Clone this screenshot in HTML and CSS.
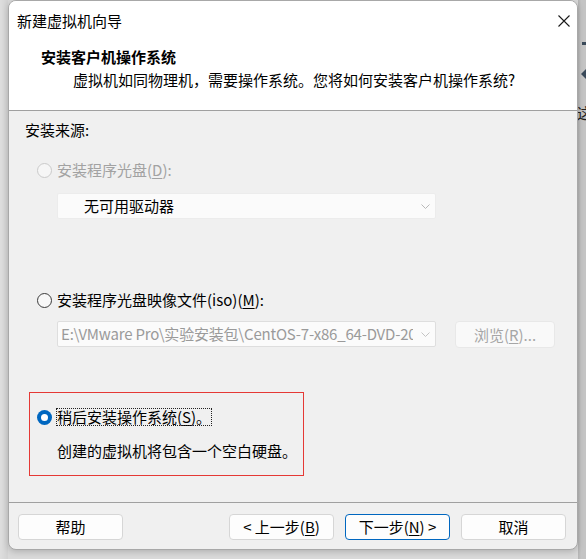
FILE: index.html
```html
<!DOCTYPE html>
<html lang="zh-CN">
<head>
<meta charset="utf-8">
<title>新建虚拟机向导</title>
<link rel="stylesheet" href="styles.css">
</head>
<body>
<div class="desk">
  <div class="gap-left"></div>
  <div class="window">
    <div class="header">
      <div class="titlebar">
        <span class="title">新建虚拟机向导</span>
        <svg class="close" width="12" height="12" viewBox="0 0 12 12"><path d="M0.5 0.5L11.5 11.5M11.5 0.5L0.5 11.5" stroke="#1a1a1a" stroke-width="1.1" fill="none"/></svg>
      </div>
      <div class="heading">安装客户机操作系统</div>
      <div class="subtitle">虚拟机如同物理机，需要操作系统。您将如何安装客户机操作系统?</div>
    </div>
    <div class="content">
      <div class="source">安装来源:</div>
      <div class="radio-row disabled first">
        <span class="radio radio-disabled"></span>
        <span class="label">安装程序光盘(<u>D</u>):</span>
      </div>
      <div class="combo combo-drive">
        <span class="combo-text">无可用驱动器</span>
        <svg class="chev" width="9" height="5" viewBox="0 0 9 5"><path d="M0.5 0.5L4.5 4.5L8.5 0.5" stroke="#b8b8b8" fill="none"/></svg>
      </div>
      <div class="radio-row second">
        <span class="radio radio-off"></span>
        <span class="label">安装程序光盘映像文件(iso)(<u>M</u>):</span>
      </div>
      <div class="iso-row">
        <div class="combo combo-iso">
          <span class="combo-text iso-text">E:\VMware Pro\实验安装包\CentOS-7-x86_64-DVD-2009.iso</span>
          <svg class="chev" width="9" height="5" viewBox="0 0 9 5"><path d="M0.5 0.5L4.5 4.5L8.5 0.5" stroke="#c4c4c4" fill="none"/></svg>
        </div>
        <div class="btn btn-disabled">浏览(<u>R</u>)...</div>
      </div>
      <div class="later-box">
        <div class="radio-row later">
          <span class="radio radio-on"></span>
          <span class="label focus">稍后安装操作系统(<u>S</u>)。</span>
        </div>
        <div class="later-desc">创建的虚拟机将包含一个空白硬盘。</div>
      </div>
    </div>
    <div class="footer">
      <div class="btn">帮助</div>
      <div class="nav">
        <div class="btn">&lt; 上一步(<u>B</u>)</div>
        <div class="btn btn-default">下一步(<u>N</u>) &gt;</div>
        <div class="btn">取消</div>
      </div>
    </div>
  </div>
  <div class="strip">
    <span class="mark dash"></span>
    <span class="mark tri"></span>
    <span class="mark glyph">这</span>
  </div>
</div>
</body>
</html>
```

FILE: styles.css
```css
* { box-sizing: border-box; }
html, body { margin: 0; padding: 0; }
body {
  width: 586px;
  height: 559px;
  overflow: hidden;
  background: #d9d9d9;
  font-family: "Noto Sans CJK SC", "Microsoft YaHei", sans-serif;
  font-size: 15px;
  color: #000;
}
.desk {
  display: flex;
  width: 586px;
  height: 559px;
}
.gap-left {
  width: 8px;
  flex: none;
  background: linear-gradient(to right, #dedede, #d2d2d2);
}
.window {
  width: 570px;
  height: 550px;
  flex: none;
  display: flex;
  flex-direction: column;
  border: 1px solid #a8a8a8;
  border-radius: 8px;
  overflow: hidden;
  background: #f0f0f0;
  box-shadow: 0 2px 6px rgba(0,0,0,0.18);
  position: relative;
  z-index: 1;
}
.header {
  background: #ffffff;
  border-bottom: 1px solid #a0a0a0;
  height: 110px;
  flex: none;
}
.titlebar {
  height: 39px;
  display: flex;
  align-items: center;
  padding-left: 8px;
  padding-right: 7px;
}
.title {
  line-height: 20px;
  flex: 1;
}
.close { display: block; }
.heading {
  margin-top: 7px;
  padding-left: 32px;
  line-height: 20px;
  font-weight: bold;
}
.subtitle {
  margin-top: 3px;
  padding-left: 64px;
  line-height: 20px;
}
.content {
  flex: 1;
  padding-top: 9px;
}
.source {
  padding-left: 16px;
  line-height: 20px;
}
.radio-row {
  display: flex;
  align-items: center;
  height: 20px;
  padding-left: 28px;
}
.radio-row.first { margin-top: 20px; }
.radio-row.second { margin-top: 71px; }
.radio-row.disabled { color: #a2a2a2; }
.label { line-height: 20px; margin-left: 5px; }
.radio {
  width: 15px;
  height: 15px;
  border-radius: 50%;
  flex: none;
}
.radio-disabled {
  border: 1px solid #cacaca;
  background: #f6f6f6;
}
.radio-off {
  border: 1px solid #3b3b3b;
  background: #f8f8f8;
}
.radio-on {
  background: #0067c0;
  position: relative;
}
.radio-on::after {
  content: "";
  position: absolute;
  left: 4px;
  top: 4px;
  width: 7px;
  height: 7px;
  border-radius: 50%;
  background: #ffffff;
}
.combo {
  display: flex;
  align-items: center;
  height: 26px;
  width: 379px;
  background: #fbfbfb;
  border: 1px solid #ececec;
  border-radius: 2px;
  overflow: hidden;
}
.combo-drive {
  margin-top: 13px;
  margin-left: 48px;
  padding-left: 26px;
}
.combo-text {
  flex: 1;
  white-space: nowrap;
  overflow: hidden;
  line-height: 20px;
}
.chev { flex: none; margin: 0 5px 0 8px; }
.iso-row {
  display: flex;
  margin-top: 11px;
  margin-left: 48px;
  gap: 19px;
}
.combo-iso {
  padding-left: 3px;
  border-color: #dedede;
}
.iso-text {
  color: #9a9a9a;
  letter-spacing: -0.2px;
}
.btn {
  width: 105px;
  height: 26px;
  display: flex;
  align-items: center;
  justify-content: center;
  background: #fdfdfd;
  border: 1px solid #d6d6d6;
  border-radius: 4px;
  line-height: 20px;
  white-space: nowrap;
}
.iso-row .btn { width: 100px; height: 27px; }
.btn-disabled {
  color: #a6a6a6;
  background: #f9f9f9;
  border-color: #e8e8e8;
}
.btn-default {
  border-color: #0067c0;
}
.later-box {
  margin-top: 44px;
  margin-left: 20px;
  width: 275px;
  height: 84px;
  border: 1px solid #e53935;
  padding-top: 14px;
}
.radio-row.later { padding-left: 7px; }
.focus {
  outline: 1px dotted #222;
  outline-offset: -1px;
  line-height: 18px;
  padding: 0 1px;
  margin-left: 4px;
}
.later-desc {
  margin-top: 14px;
  padding-left: 27px;
  line-height: 20px;
}
.footer {
  flex: none;
  height: 47px;
  border-top: 1px solid #a0a0a0;
  padding: 11px 11px 0 9px;
  display: flex;
  align-items: flex-start;
}
.nav {
  margin-left: auto;
  display: flex;
  gap: 11px;
}
u { text-decoration: underline; text-underline-offset: 2px; }
.strip {
  flex: 1;
  background: linear-gradient(to right, #b4b4b4 0px, #c4c4c4 3px, #c4c4c4 100%);
  display: flex;
  flex-direction: column;
  align-items: flex-end;
  overflow: hidden;
}
.mark { display: block; }
.dash {
  margin-top: 42px;
  width: 4px;
  height: 3px;
  background: #3a4a5a;
}
.tri {
  margin-top: 24px;
  width: 0;
  height: 0;
  border-top: 5px solid transparent;
  border-bottom: 5px solid transparent;
  border-right: 5px solid #3a4a5a;
}
.glyph {
  margin-top: 24px;
  margin-right: -6px;
  font-size: 15px;
  line-height: 20px;
  color: #222;
}
```
